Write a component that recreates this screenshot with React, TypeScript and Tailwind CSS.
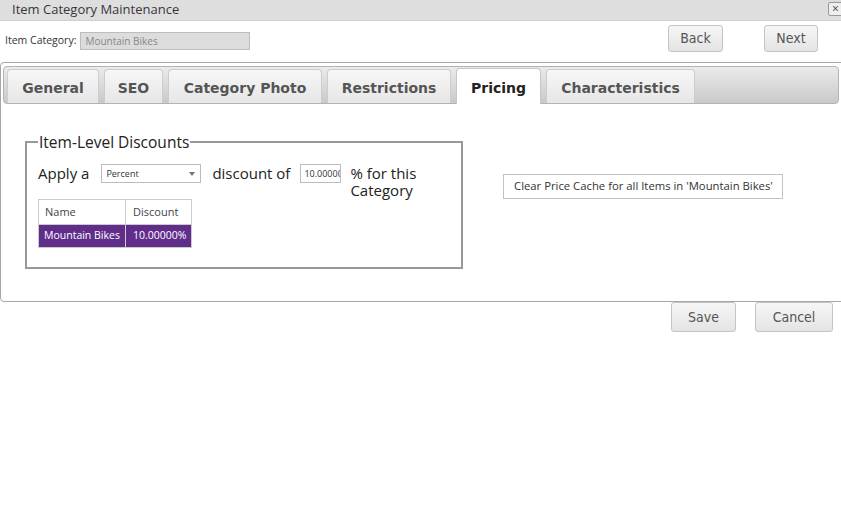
import React from "react";

const sans = { fontFamily: '"Open Sans", "Noto Sans", sans-serif' };
const verdana = { fontFamily: '"DejaVu Sans", Verdana, sans-serif' };
const cond = { fontFamily: '"DejaVu Sans Condensed", "DejaVu Sans", sans-serif', fontStretch: "condensed" as const };

const tabs = [
  { label: "General", w: 92 },
  { label: "SEO", w: 59 },
  { label: "Category Photo", w: 154 },
  { label: "Restrictions", w: 124 },
  { label: "Pricing", w: 85, active: true },
  { label: "Characteristics", w: 149 },
];

function Btn({ label, w, h }: { label: string; w: number; h: number }) {
  return (
    <button
      className="rounded-[3px] border border-[#c4c4c4] bg-gradient-to-b from-[#f6f6f6] to-[#e4e4e4] text-[14px] text-[#555] flex items-center justify-center"
      style={{ ...cond, width: w, height: h }}
    >
      {label}
    </button>
  );
}

export default function App() {
  return (
    <div className="w-[841px] h-[516px] bg-white overflow-hidden relative" style={sans}>
      {/* title bar */}
      <div className="relative h-[21px] bg-[#dedede] border-b border-[#cfcfcf] flex items-center pl-[12px] text-[13px] text-[#3a3440]">
        Item Category Maintenance
        <div className="absolute right-[-2px] top-[2px] w-[15px] h-[14px] border border-[#999] rounded-[2px] bg-[#eee] flex items-center justify-center text-[12px] leading-none text-[#444]">
          ×
        </div>
      </div>

      {/* header row */}
      <div className="h-[41px] flex items-start relative">
        <div className="flex items-center mt-[11px] ml-[5px]">
          <span className="text-[10.5px] text-[#333]">Item Category:</span>
          <div className="ml-[4px] w-[170px] h-[18px] bg-[#dcdcdc] border border-[#bdbdbd] text-[10px] text-[#888] pl-[4px] flex items-center">
            Mountain Bikes
          </div>
        </div>
        <div className="absolute left-[668px] top-[4px]">
          <Btn label="Back" w={55} h={27} />
        </div>
        <div className="absolute left-[764px] top-[4px]">
          <Btn label="Next" w={54} h={27} />
        </div>
      </div>

      {/* panel */}
      <div className="w-[860px] h-[240px] border border-[#a6a6a6] rounded-[4px] bg-white">
        <div className="mt-[3px] ml-[2px] w-[836px] h-[38px] border border-[#b3b3b3] rounded-[4px] bg-gradient-to-b from-[#ebebeb] to-[#c9c9c9] flex items-end pl-[3px] gap-[5px]">
          {tabs.map((t) =>
            t.active ? (
              <div
                key={t.label}
                className="h-[36px] pt-[4px] mb-[-1px] rounded-t-[4px] border border-b-0 border-[#c6c6c6] bg-white flex items-center justify-center text-[14px] font-bold text-[#222]"
                style={{ ...verdana, width: t.w }}
              >
                {t.label}
              </div>
            ) : (
              <div
                key={t.label}
                className="h-[34px] pt-[3px] rounded-t-[4px] border border-b-0 border-[#cdcdcd] bg-gradient-to-b from-[#f7f7f7] to-[#e6e6e6] flex items-center justify-center text-[14px] font-bold text-[#555]"
                style={{ ...verdana, width: t.w }}
              >
                {t.label}
              </div>
            )
          )}
        </div>

        <div className="flex items-start pt-[28px]">
          <fieldset className="shrink-0 ml-[24px] w-[438px] h-[137px] border-2 border-[#999] px-[11px] pb-[20px]">
            <legend className="text-[15.5px] text-[#222] px-[1px] leading-[20px]">Item-Level Discounts</legend>
            <div className="flex items-start mt-[12px] text-[15px] text-[#222] leading-[17px] whitespace-nowrap">
              <span className="shrink-0 mt-[1px]">Apply a</span>
              <div className="shrink-0 ml-[12px] w-[100px] h-[19px] border border-[#bbb] bg-white text-[9px] text-[#333] pl-[4px] flex items-center justify-between pr-[5px]">
                <span>Percent</span>
                <span className="w-0 h-0 border-l-[3.5px] border-r-[3.5px] border-t-[4px] border-l-transparent border-r-transparent border-t-[#777]"></span>
              </div>
              <span className="shrink-0 ml-[11px] mt-[1px]">discount of</span>
              <div className="shrink-0 ml-[10px] w-[41px] h-[19px] border border-[#bbb] bg-white text-[9px] text-[#333] pl-[3px] flex items-center overflow-hidden whitespace-nowrap">
                10.00000
              </div>
              <span className="shrink-0 ml-[9px] mt-[1px] w-[100px] whitespace-normal">% for this Category</span>
            </div>
            <table className="border-collapse text-[11px]">
              <tbody>
                <tr className="h-[25px]">
                  <td className="w-[87px] border border-[#ccc] pl-[6px] text-[#444]">Name</td>
                  <td className="w-[66px] border border-[#ccc] pl-[7px] text-[#444]">Discount</td>
                </tr>
                <tr className="h-[23px] bg-[#612d8a] text-white text-[10.5px]">
                  <td className="border border-[#ccc] pl-[5px] whitespace-nowrap">Mountain Bikes</td>
                  <td className="border border-[#ccc] pl-[7px]">10.00000%</td>
                </tr>
              </tbody>
            </table>
          </fieldset>
          <button className="shrink-0 ml-[40px] mt-[42px] w-[280px] h-[25px] border border-[#c2c2c2] bg-white text-[11.3px] text-[#333] flex items-center justify-center whitespace-nowrap" style={sans}>
            Clear Price Cache for all Items in 'Mountain Bikes'
          </button>
        </div>
      </div>

      {/* footer buttons */}
      <div className="flex justify-end gap-[19px] pr-[8px]">
        <Btn label="Save" w={65} h={30} />
        <Btn label="Cancel" w={78} h={30} />
      </div>
    </div>
  );
}
